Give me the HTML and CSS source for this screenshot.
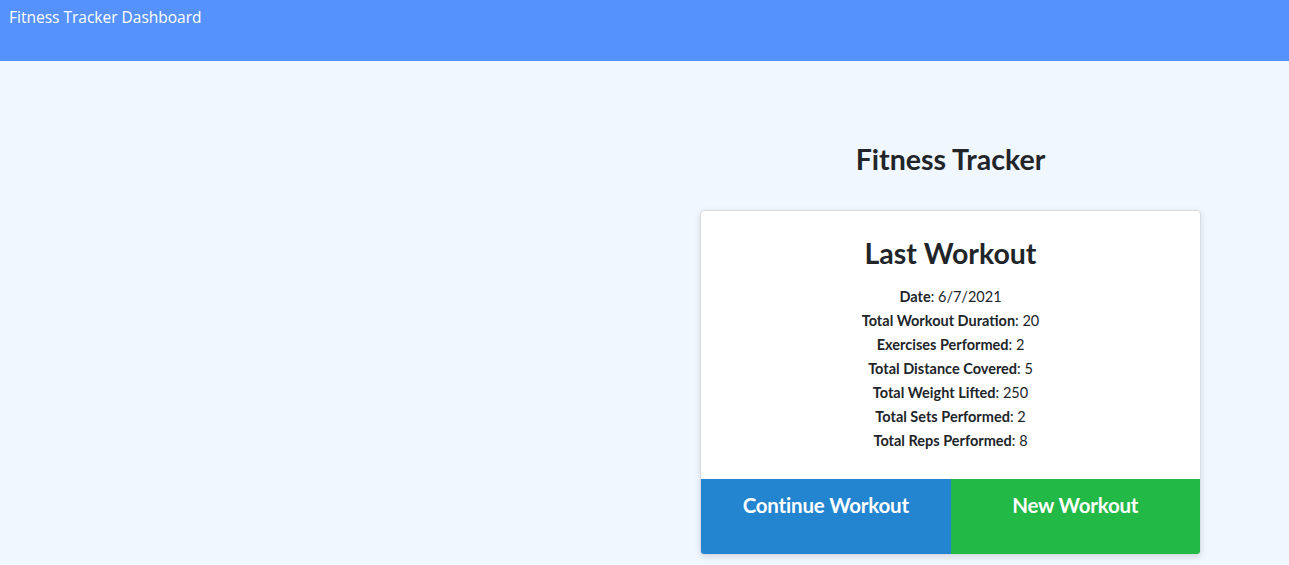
FILE: index.html
```html
<!DOCTYPE html>
<html>
<head>
<meta charset="utf-8">
<link rel="stylesheet" href="styles.css">
</head>
<body>
<header class="topbar">Fitness Tracker Dashboard</header>
<main class="main">
  <div class="spacer"></div>
  <section class="column">
    <h1 class="title">Fitness Tracker</h1>
    <div class="card">
      <div class="card-body">
        <h2 class="card-title">Last Workout</h2>
        <p class="stat"><b>Date</b>: 6/7/2021</p>
        <p class="stat"><b>Total Workout Duration</b>: 20</p>
        <p class="stat"><b>Exercises Performed</b>: 2</p>
        <p class="stat"><b>Total Distance Covered</b>: 5</p>
        <p class="stat"><b>Total Weight Lifted</b>: 250</p>
        <p class="stat"><b>Total Sets Performed</b>: 2</p>
        <p class="stat"><b>Total Reps Performed</b>: 8</p>
      </div>
      <div class="actions">
        <a class="btn btn-continue">Continue Workout</a>
        <a class="btn btn-new">New Workout</a>
      </div>
    </div>
  </section>
</main>
</body>
</html>
```

FILE: styles.css
```css
* { box-sizing: border-box; }
html, body { margin: 0; padding: 0; }
body {
  background: #f0f7ff;
  font-family: Lato, "Noto Sans", sans-serif;
  color: #212529;
  height: 565px;
  overflow: hidden;
}
.topbar {
  background: #5592fd;
  color: #ffffff;
  height: 61px;
  padding: 5px 9px;
  font-family: "Open Sans", "Noto Sans", sans-serif;
  font-size: 15.5px;
  line-height: 24px;
}
.main {
  display: flex;
  padding-top: 80px;
}
.spacer { flex: 1; }
.column {
  width: 501px;
  margin-right: 88px;
  display: flex;
  flex-direction: column;
  align-items: stretch;
}
.title {
  margin: 0 0 33px 0;
  text-align: center;
  font-size: 28.5px;
  font-weight: 700;
  line-height: 36px;
  color: #212529;
}
.card {
  background: #ffffff;
  border: 1px solid #d9dce0;
  border-radius: 4px;
  box-shadow: 0 2px 6px rgba(0, 0, 0, 0.12);
  overflow: hidden;
}
.card-body {
  padding: 22px 20px 26px;
  text-align: center;
}
.card-title {
  margin: 0 0 12px 0;
  font-size: 28.5px;
  font-weight: 700;
  line-height: 40px;
}
.stat {
  margin: 0;
  font-size: 14.5px;
  line-height: 24px;
}
.stat b { font-weight: 700; }
.actions {
  display: flex;
  height: 75px;
}
.btn {
  flex: 1;
  color: #ffffff;
  font-size: 20.5px;
  font-weight: 700;
  text-align: center;
  padding-top: 13px;
  line-height: 26px;
  letter-spacing: -0.2px;
}
.btn-continue { background: #2385d0; }
.btn-new { background: #22b946; }
```
